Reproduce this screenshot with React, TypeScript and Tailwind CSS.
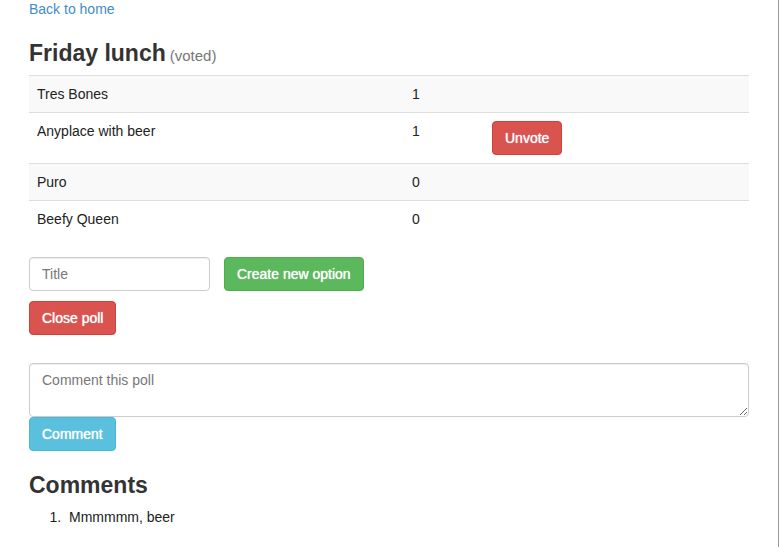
import type { ReactNode } from 'react';

type Option = { title: string; votes: number; voted: boolean };

const options: Option[] = [
  { title: 'Tres Bones', votes: 1, voted: false },
  { title: 'Anyplace with beer', votes: 1, voted: true },
  { title: 'Puro', votes: 0, voted: false },
  { title: 'Beefy Queen', votes: 0, voted: false },
];

const comments = ['Mmmmmm, beer'];

const tones = {
  danger: 'bg-[#d9534f] border-[#d43f3a] hover:bg-[#c9302c]',
  success: 'bg-[#5cb85c] border-[#4cae4c] hover:bg-[#449d44]',
  info: 'bg-[#5bc0de] border-[#46b8da] hover:bg-[#31b0d5]',
};

function Button({ tone, children }: { tone: keyof typeof tones; children: ReactNode }) {
  return (
    <button
      type="button"
      className={`block cursor-pointer rounded border px-3 py-1.5 leading-5 whitespace-nowrap text-white [text-shadow:0_0_1px_#fff] ${tones[tone]}`}
    >
      {children}
    </button>
  );
}

const field =
  'block rounded border border-[#ccc] bg-white px-3 py-1.5 leading-5 text-[#555] shadow-[inset_0_1px_1px_rgba(0,0,0,0.075)] outline-none placeholder:text-[#777] focus:border-[#66afe9]';

const heading = 'mt-5 mb-2 flex items-baseline gap-1 text-[23px] leading-7 font-bold';

export default function App() {
  return (
    <div className="min-h-screen border-r border-[#999] bg-white font-['Liberation_Sans',Arial,sans-serif] text-[14px] leading-5 text-[#333]">
      <main className="mx-auto max-w-[750px] px-[15px]">
        <a href="#home" className="block w-fit leading-[19px] text-[#428bca] hover:underline">
          Back to home
        </a>

        <h3 className={heading}>
          Friday lunch <small className="text-[15px] leading-none font-normal text-[#777]">(voted)</small>
        </h3>

        <table className="mb-5 w-full table-fixed border-separate border-spacing-0 text-[#222]">
          <colgroup>
            <col />
            <col className="w-[80px]" />
            <col className="w-[265px]" />
          </colgroup>
          <tbody>
            {options.map((option) => (
              <tr key={option.title} className="odd:bg-[#f9f9f9]">
                <td className="border-t border-[#ddd] p-2 align-top">{option.title}</td>
                <td className="border-t border-[#ddd] p-2 align-top">{option.votes}</td>
                <td className="border-t border-[#ddd] p-2 align-top">
                  {option.voted && <Button tone="danger">Unvote</Button>}
                </td>
              </tr>
            ))}
          </tbody>
        </table>

        <form className="mb-2.5 flex gap-3.5" onSubmit={(e) => e.preventDefault()}>
          <input type="text" aria-label="Title" placeholder="Title" className={`w-[181px] ${field}`} />
          <Button tone="success">Create new option</Button>
        </form>
        <Button tone="danger">Close poll</Button>

        <form className="mt-7" onSubmit={(e) => e.preventDefault()}>
          <textarea
            rows={2}
            aria-label="Comment this poll"
            placeholder="Comment this poll"
            className={`w-full resize-y ${field}`}
          />
          <Button tone="info">Comment</Button>
        </form>

        <h3 className={heading}>Comments</h3>
        <ol className="list-decimal pl-10 text-[#222]">
          {comments.map((comment) => (
            <li key={comment} className="marker:content-[counter(list-item)_'.__']">
              {comment}
            </li>
          ))}
        </ol>
      </main>
    </div>
  );
}
